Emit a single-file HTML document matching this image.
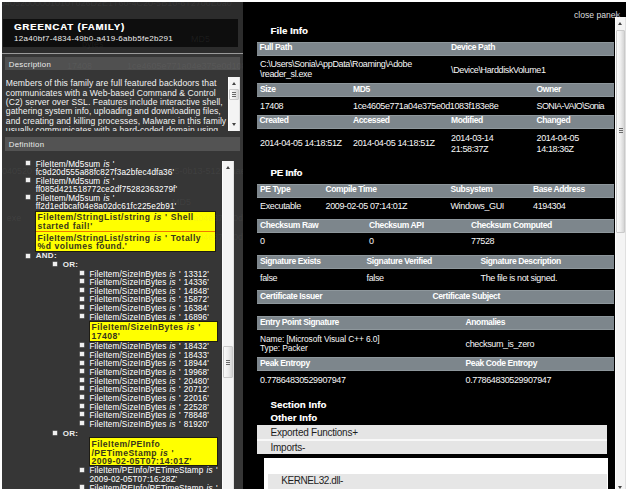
<!DOCTYPE html>
<html><head><meta charset="utf-8">
<style>
*{margin:0;padding:0;box-sizing:border-box}
html,body{width:628px;height:491px;overflow:hidden;background:#fff;font-family:"Liberation Sans",sans-serif;position:relative}
</style></head><body>
<div style="position:absolute;left:2px;top:2px;width:624px;height:487px;background:#000"></div>
<div style="position:absolute;left:574px;top:10.72px;font-size:8.6px;line-height:8.6px;white-space:nowrap;color:#ddd">close panel</div>
<div style="position:absolute;left:615.5px;top:10.72px;font-size:8.6px;line-height:8.6px;white-space:nowrap;color:#8fa0c0">&times;</div>
<div style="position:absolute;left:270.5px;top:26.17px;font-size:9.6px;line-height:9.6px;white-space:nowrap;color:#fff;font-weight:bold;letter-spacing:0.08px;text-shadow:0.3px 0 0 rgba(255,255,255,.5)">File Info</div>
<div style="position:absolute;left:257px;top:42px;width:357px;height:14px;background:#7d868c;border-top:1px solid #8e979c;border-bottom:1px solid #8e979c"></div>
<div style="position:absolute;left:259.5px;top:43.00px;font-size:8.5px;line-height:8.5px;white-space:nowrap;color:#fff;font-weight:bold;letter-spacing:-0.38px">Full Path</div>
<div style="position:absolute;left:451px;top:43.00px;font-size:8.5px;line-height:8.5px;white-space:nowrap;color:#fff;font-weight:bold;letter-spacing:-0.38px">Device Path</div>
<div style="position:absolute;left:260px;top:60.28px;font-size:9px;line-height:9px;white-space:nowrap;color:#f8f8f8;letter-spacing:-0.37px">C:\Users\Sonia\AppData\Roaming\Adobe</div>
<div style="position:absolute;left:260px;top:69.88px;font-size:9px;line-height:9px;white-space:nowrap;color:#f8f8f8;letter-spacing:-0.37px">\reader_sl.exe</div>
<div style="position:absolute;left:451px;top:66.38px;font-size:9px;line-height:9px;white-space:nowrap;color:#f8f8f8;letter-spacing:-0.37px">\Device\HarddiskVolume1</div>
<div style="position:absolute;left:257px;top:83px;width:357px;height:14px;background:#7d868c;border-top:1px solid #8e979c;border-bottom:1px solid #8e979c"></div>
<div style="position:absolute;left:260px;top:84.90px;font-size:8.5px;line-height:8.5px;white-space:nowrap;color:#fff;font-weight:bold;letter-spacing:-0.38px">Size</div>
<div style="position:absolute;left:353px;top:84.90px;font-size:8.5px;line-height:8.5px;white-space:nowrap;color:#fff;font-weight:bold;letter-spacing:-0.38px">MD5</div>
<div style="position:absolute;left:536.5px;top:84.90px;font-size:8.5px;line-height:8.5px;white-space:nowrap;color:#fff;font-weight:bold;letter-spacing:-0.38px">Owner</div>
<div style="position:absolute;left:260px;top:101.88px;font-size:9px;line-height:9px;white-space:nowrap;color:#f8f8f8;letter-spacing:-0.37px">17408</div>
<div style="position:absolute;left:353px;top:101.88px;font-size:9px;line-height:9px;white-space:nowrap;color:#f8f8f8;letter-spacing:-0.37px">1ce4605e771a04e375e0d1083f183e8e</div>
<div style="position:absolute;left:536.5px;top:101.88px;font-size:9px;line-height:9px;white-space:nowrap;color:#f8f8f8;letter-spacing:-0.62px">SONIA-VAIO\Sonia</div>
<div style="position:absolute;left:257px;top:115px;width:357px;height:14px;background:#7d868c;border-top:1px solid #8e979c;border-bottom:1px solid #8e979c"></div>
<div style="position:absolute;left:259.5px;top:116.00px;font-size:8.5px;line-height:8.5px;white-space:nowrap;color:#fff;font-weight:bold;letter-spacing:-0.38px">Created</div>
<div style="position:absolute;left:353px;top:116.00px;font-size:8.5px;line-height:8.5px;white-space:nowrap;color:#fff;font-weight:bold;letter-spacing:-0.38px">Accessed</div>
<div style="position:absolute;left:451px;top:116.00px;font-size:8.5px;line-height:8.5px;white-space:nowrap;color:#fff;font-weight:bold;letter-spacing:-0.38px">Modified</div>
<div style="position:absolute;left:536.5px;top:116.00px;font-size:8.5px;line-height:8.5px;white-space:nowrap;color:#fff;font-weight:bold;letter-spacing:-0.38px">Changed</div>
<div style="position:absolute;left:260px;top:138.68px;font-size:9px;line-height:9px;white-space:nowrap;color:#f8f8f8;letter-spacing:-0.37px">2014-04-05 14:18:51Z</div>
<div style="position:absolute;left:353px;top:138.68px;font-size:9px;line-height:9px;white-space:nowrap;color:#f8f8f8;letter-spacing:-0.37px">2014-04-05 14:18:51Z</div>
<div style="position:absolute;left:451px;top:133.88px;font-size:9px;line-height:9px;white-space:nowrap;color:#f8f8f8;letter-spacing:-0.37px">2014-03-14</div>
<div style="position:absolute;left:451px;top:144.58px;font-size:9px;line-height:9px;white-space:nowrap;color:#f8f8f8;letter-spacing:-0.37px">21:58:37Z</div>
<div style="position:absolute;left:536.5px;top:133.88px;font-size:9px;line-height:9px;white-space:nowrap;color:#f8f8f8;letter-spacing:-0.37px">2014-04-05</div>
<div style="position:absolute;left:536.5px;top:144.58px;font-size:9px;line-height:9px;white-space:nowrap;color:#f8f8f8;letter-spacing:-0.37px">14:18:36Z</div>
<div style="position:absolute;left:270.5px;top:167.87px;font-size:9.6px;line-height:9.6px;white-space:nowrap;color:#fff;font-weight:bold;letter-spacing:-0.2px;text-shadow:0.3px 0 0 rgba(255,255,255,.5)">PE Info</div>
<div style="position:absolute;left:257px;top:184px;width:357px;height:14px;background:#7d868c;border-top:1px solid #8e979c;border-bottom:1px solid #8e979c"></div>
<div style="position:absolute;left:260px;top:184.80px;font-size:8.5px;line-height:8.5px;white-space:nowrap;color:#fff;font-weight:bold;letter-spacing:-0.38px">PE Type</div>
<div style="position:absolute;left:325.5px;top:184.80px;font-size:8.5px;line-height:8.5px;white-space:nowrap;color:#fff;font-weight:bold;letter-spacing:-0.38px">Compile Time</div>
<div style="position:absolute;left:450.5px;top:184.80px;font-size:8.5px;line-height:8.5px;white-space:nowrap;color:#fff;font-weight:bold;letter-spacing:-0.38px">Subsystem</div>
<div style="position:absolute;left:533px;top:184.80px;font-size:8.5px;line-height:8.5px;white-space:nowrap;color:#fff;font-weight:bold;letter-spacing:-0.38px">Base Address</div>
<div style="position:absolute;left:260px;top:201.88px;font-size:9px;line-height:9px;white-space:nowrap;color:#f8f8f8;letter-spacing:-0.37px">Executable</div>
<div style="position:absolute;left:325.5px;top:201.88px;font-size:9px;line-height:9px;white-space:nowrap;color:#f8f8f8;letter-spacing:-0.37px">2009-02-05 07:14:01Z</div>
<div style="position:absolute;left:450.5px;top:201.88px;font-size:9px;line-height:9px;white-space:nowrap;color:#f8f8f8;letter-spacing:-0.37px">Windows_GUI</div>
<div style="position:absolute;left:533px;top:201.88px;font-size:9px;line-height:9px;white-space:nowrap;color:#f8f8f8;letter-spacing:-0.37px">4194304</div>
<div style="position:absolute;left:257px;top:219px;width:357px;height:14px;background:#7d868c;border-top:1px solid #8e979c;border-bottom:1px solid #8e979c"></div>
<div style="position:absolute;left:260px;top:220.80px;font-size:8.5px;line-height:8.5px;white-space:nowrap;color:#fff;font-weight:bold;letter-spacing:-0.38px">Checksum Raw</div>
<div style="position:absolute;left:369px;top:220.80px;font-size:8.5px;line-height:8.5px;white-space:nowrap;color:#fff;font-weight:bold;letter-spacing:-0.38px">Checksum API</div>
<div style="position:absolute;left:471px;top:220.80px;font-size:8.5px;line-height:8.5px;white-space:nowrap;color:#fff;font-weight:bold;letter-spacing:-0.38px">Checksum Computed</div>
<div style="position:absolute;left:260px;top:237.38px;font-size:9px;line-height:9px;white-space:nowrap;color:#f8f8f8;letter-spacing:-0.37px">0</div>
<div style="position:absolute;left:369px;top:237.38px;font-size:9px;line-height:9px;white-space:nowrap;color:#f8f8f8;letter-spacing:-0.37px">0</div>
<div style="position:absolute;left:471px;top:237.38px;font-size:9px;line-height:9px;white-space:nowrap;color:#f8f8f8;letter-spacing:-0.37px">77528</div>
<div style="position:absolute;left:257px;top:255px;width:357px;height:14px;background:#7d868c;border-top:1px solid #8e979c;border-bottom:1px solid #8e979c"></div>
<div style="position:absolute;left:260px;top:256.80px;font-size:8.5px;line-height:8.5px;white-space:nowrap;color:#fff;font-weight:bold;letter-spacing:-0.38px">Signature Exists</div>
<div style="position:absolute;left:366.5px;top:256.80px;font-size:8.5px;line-height:8.5px;white-space:nowrap;color:#fff;font-weight:bold;letter-spacing:-0.38px">Signature Verified</div>
<div style="position:absolute;left:480.5px;top:256.80px;font-size:8.5px;line-height:8.5px;white-space:nowrap;color:#fff;font-weight:bold;letter-spacing:-0.38px">Signature Description</div>
<div style="position:absolute;left:260px;top:274.18px;font-size:9px;line-height:9px;white-space:nowrap;color:#f8f8f8;letter-spacing:-0.37px">false</div>
<div style="position:absolute;left:366.5px;top:274.18px;font-size:9px;line-height:9px;white-space:nowrap;color:#f8f8f8;letter-spacing:-0.37px">false</div>
<div style="position:absolute;left:480.5px;top:274.18px;font-size:9px;line-height:9px;white-space:nowrap;color:#f8f8f8;letter-spacing:-0.37px">The file is not signed.</div>
<div style="position:absolute;left:257px;top:290px;width:357px;height:14px;background:#7d868c;border-top:1px solid #8e979c;border-bottom:1px solid #8e979c"></div>
<div style="position:absolute;left:260px;top:291.80px;font-size:8.5px;line-height:8.5px;white-space:nowrap;color:#fff;font-weight:bold;letter-spacing:-0.38px">Certificate Issuer</div>
<div style="position:absolute;left:432.5px;top:291.80px;font-size:8.5px;line-height:8.5px;white-space:nowrap;color:#fff;font-weight:bold;letter-spacing:-0.38px">Certificate Subject</div>
<div style="position:absolute;left:257px;top:316px;width:357px;height:14px;background:#7d868c;border-top:1px solid #8e979c;border-bottom:1px solid #8e979c"></div>
<div style="position:absolute;left:260px;top:317.80px;font-size:8.5px;line-height:8.5px;white-space:nowrap;color:#fff;font-weight:bold;letter-spacing:-0.38px">Entry Point Signature</div>
<div style="position:absolute;left:465.5px;top:317.80px;font-size:8.5px;line-height:8.5px;white-space:nowrap;color:#fff;font-weight:bold;letter-spacing:-0.38px">Anomalies</div>
<div style="position:absolute;left:260px;top:334.69px;font-size:8.4px;line-height:8.4px;white-space:nowrap;color:#f8f8f8;letter-spacing:-0.1px">Name: [Microsoft Visual C++ 6.0]</div>
<div style="position:absolute;left:260px;top:343.89px;font-size:8.4px;line-height:8.4px;white-space:nowrap;color:#f8f8f8;letter-spacing:-0.1px">Type: Packer</div>
<div style="position:absolute;left:465.5px;top:340.38px;font-size:9px;line-height:9px;white-space:nowrap;color:#f8f8f8;letter-spacing:-0.37px">checksum_is_zero</div>
<div style="position:absolute;left:257px;top:357px;width:357px;height:14px;background:#7d868c;border-top:1px solid #8e979c;border-bottom:1px solid #8e979c"></div>
<div style="position:absolute;left:260px;top:358.80px;font-size:8.5px;line-height:8.5px;white-space:nowrap;color:#fff;font-weight:bold;letter-spacing:-0.38px">Peak Entropy</div>
<div style="position:absolute;left:465.5px;top:358.80px;font-size:8.5px;line-height:8.5px;white-space:nowrap;color:#fff;font-weight:bold;letter-spacing:-0.38px">Peak Code Entropy</div>
<div style="position:absolute;left:260px;top:376.38px;font-size:9px;line-height:9px;white-space:nowrap;color:#f8f8f8;letter-spacing:-0.37px">0.77864830529907947</div>
<div style="position:absolute;left:465.5px;top:376.38px;font-size:9px;line-height:9px;white-space:nowrap;color:#f8f8f8;letter-spacing:-0.37px">0.77864830529907947</div>
<div style="position:absolute;left:270.5px;top:399.87px;font-size:9.6px;line-height:9.6px;white-space:nowrap;color:#fff;font-weight:bold;letter-spacing:0.08px;text-shadow:0.3px 0 0 rgba(255,255,255,.5)">Section Info</div>
<div style="position:absolute;left:270.5px;top:413.37px;font-size:9.6px;line-height:9.6px;white-space:nowrap;color:#fff;font-weight:bold;letter-spacing:0.08px;text-shadow:0.3px 0 0 rgba(255,255,255,.5)">Other Info</div>
<div style="position:absolute;left:257px;top:425px;width:350px;height:29px;background:#f8f8f8"></div>
<div style="position:absolute;left:257px;top:425px;width:350px;height:14px;background:#e5e5e5"></div>
<div style="position:absolute;left:257px;top:441px;width:350px;height:13px;background:#e5e5e5"></div>
<div style="position:absolute;left:270.5px;top:428.04px;font-size:10px;line-height:10px;white-space:nowrap;color:#1e1e1e;letter-spacing:-0.25px">Exported Functions+</div>
<div style="position:absolute;left:270.5px;top:442.54px;font-size:10px;line-height:10px;white-space:nowrap;color:#1e1e1e;letter-spacing:-0.25px">Imports-</div>
<div style="position:absolute;left:264px;top:458px;width:344px;height:31px;background:#fff"></div>
<div style="position:absolute;left:268px;top:474px;width:339px;height:15px;background:#e6e6e6"></div>
<div style="position:absolute;left:281.3px;top:475.54px;font-size:10px;line-height:10px;white-space:nowrap;color:#1e1e1e;letter-spacing:-0.43px">KERNEL32.dll-</div>
<div style="position:absolute;left:615px;top:17px;width:11px;height:472px;background:#f4f4f4;border-left:1px solid #fdfdfd;border-right:1px solid #e0e0e0"></div>
<div style="position:absolute;left:616px;top:29.5px;width:9px;height:203.0px;background:linear-gradient(90deg,#fafafa 0%,#eeeeee 50%,#d6d6d6 100%);border:1px solid #cacaca;border-radius:1px"></div>
<div style="position:absolute;left:618.0px;top:21.5px;width:0;height:0;border-left:2.5px solid transparent;border-right:2.5px solid transparent;border-bottom:3px solid #444"></div>
<div style="position:absolute;left:618.0px;top:486.0px;width:0;height:0;border-left:2.5px solid transparent;border-right:2.5px solid transparent;border-top:3px solid #444"></div>
<div style="position:absolute;left:618.5px;top:127.80000000000001px;width:4px;height:1px;background:#6a6a6a"></div>
<div style="position:absolute;left:618.5px;top:129.8px;width:4px;height:1px;background:#6a6a6a"></div>
<div style="position:absolute;left:618.5px;top:131.8px;width:4px;height:1px;background:#6a6a6a"></div>
<div style="position:absolute;left:2px;top:2px;width:241px;height:487px;background:#2c2c2c"></div>
<div style="position:absolute;left:3px;top:19px;width:235px;height:28px;background:#0e0e0e"></div>
<div style="position:absolute;left:14px;top:22.37px;font-size:9.6px;line-height:9.6px;white-space:nowrap;color:#fff;font-weight:bold;letter-spacing:0.85px;text-shadow:0.4px 0 0 rgba(255,255,255,.6)">GREENCAT (FAMILY)</div>
<div style="position:absolute;left:14px;top:34.63px;font-size:8px;line-height:8px;white-space:nowrap;color:#eee;letter-spacing:0.29px">12a40bf7-4834-49b0-a419-6abb5fe2b291</div>
<div style="position:absolute;left:2px;top:53px;width:241px;height:1px;background:#9a9a9a"></div>
<div style="position:absolute;left:2px;top:54px;width:241px;height:435px;background:#363636"></div>
<div style="position:absolute;left:5px;top:57px;width:235px;height:13px;background:#505050"></div>
<div style="position:absolute;left:8.8px;top:61.00px;font-size:7.8px;line-height:7.8px;white-space:nowrap;color:#ececec;letter-spacing:0.3px">Description</div>
<div style="position:absolute;left:2px;top:76px;width:226px;height:55px;overflow:hidden">
<div style="position:absolute;left:3.8px;top:3.37px;font-size:8.6px;line-height:8.6px;white-space:nowrap;color:#f2f2f2;letter-spacing:0.07px">Members of this family are full featured backdoors that</div>
<div style="position:absolute;left:3.8px;top:12.72px;font-size:8.6px;line-height:8.6px;white-space:nowrap;color:#f2f2f2;letter-spacing:0.07px">communicates with a Web-based Command &amp; Control</div>
<div style="position:absolute;left:3.8px;top:22.07px;font-size:8.6px;line-height:8.6px;white-space:nowrap;color:#f2f2f2;letter-spacing:0.07px">(C2) server over SSL. Features include interactive shell,</div>
<div style="position:absolute;left:3.8px;top:31.42px;font-size:8.6px;line-height:8.6px;white-space:nowrap;color:#f2f2f2;letter-spacing:0.07px">gathering system info, uploading and downloading files,</div>
<div style="position:absolute;left:3.8px;top:40.77px;font-size:8.6px;line-height:8.6px;white-space:nowrap;color:#f2f2f2;letter-spacing:0.07px">and creating and killing processes, Malware in this family</div>
<div style="position:absolute;left:3.8px;top:50.12px;font-size:8.6px;line-height:8.6px;white-space:nowrap;color:#f2f2f2;letter-spacing:0.07px">usually communicates with a hard-coded domain using</div>
</div>
<div style="position:absolute;left:228px;top:77px;width:12px;height:54px;background:#f4f4f4;border-left:1px solid #fdfdfd;border-right:1px solid #e0e0e0"></div>
<div style="position:absolute;left:229px;top:89px;width:10px;height:11px;background:linear-gradient(90deg,#fafafa 0%,#eeeeee 50%,#d6d6d6 100%);border:1px solid #cacaca;border-radius:1px"></div>
<div style="position:absolute;left:231.5px;top:81.7px;width:0;height:0;border-left:2.5px solid transparent;border-right:2.5px solid transparent;border-bottom:3px solid #444"></div>
<div style="position:absolute;left:231.5px;top:123.2px;width:0;height:0;border-left:2.5px solid transparent;border-right:2.5px solid transparent;border-top:3px solid #444"></div>
<div style="position:absolute;left:232.0px;top:92.0px;width:4px;height:1px;background:#6a6a6a"></div>
<div style="position:absolute;left:232.0px;top:94.0px;width:4px;height:1px;background:#6a6a6a"></div>
<div style="position:absolute;left:232.0px;top:96.0px;width:4px;height:1px;background:#6a6a6a"></div>
<div style="position:absolute;left:5px;top:137px;width:235px;height:14px;background:#535353"></div>
<div style="position:absolute;left:8.8px;top:141.30px;font-size:7.8px;line-height:7.8px;white-space:nowrap;color:#ececec;letter-spacing:0.3px">Definition</div>
<div style="position:absolute;left:26.2px;top:161.0px;width:4px;height:4px;background:#f0f0f0;box-shadow:0 0 0.5px 0.4px rgba(240,240,240,.55)"></div>
<div style="position:absolute;left:35.7px;top:160.76px;font-size:8.2px;line-height:8.2px;white-space:nowrap;color:#f4f4f4;letter-spacing:0.12px;word-spacing:0.8px;text-shadow:0 0 0.3px rgba(255,255,255,.3)">FileItem/Md5sum <i>is</i> '</div>
<div style="position:absolute;left:35.7px;top:168.96px;font-size:8.2px;line-height:8.2px;white-space:nowrap;color:#f4f4f4;letter-spacing:0.12px;word-spacing:0.8px;text-shadow:0 0 0.3px rgba(255,255,255,.3)">fc9d20d555a88fc827f3a2bfec4dfa36'</div>
<div style="position:absolute;left:26.2px;top:178.20000000000002px;width:4px;height:4px;background:#f0f0f0;box-shadow:0 0 0.5px 0.4px rgba(240,240,240,.55)"></div>
<div style="position:absolute;left:35.7px;top:177.96px;font-size:8.2px;line-height:8.2px;white-space:nowrap;color:#f4f4f4;letter-spacing:0.12px;word-spacing:0.8px;text-shadow:0 0 0.3px rgba(255,255,255,.3)">FileItem/Md5sum <i>is</i> '</div>
<div style="position:absolute;left:35.7px;top:186.26px;font-size:8.2px;line-height:8.2px;white-space:nowrap;color:#f4f4f4;letter-spacing:0.12px;word-spacing:0.8px;text-shadow:0 0 0.3px rgba(255,255,255,.3)">ff085d421518772ce2df75282363279f'</div>
<div style="position:absolute;left:26.2px;top:195.10000000000002px;width:4px;height:4px;background:#f0f0f0;box-shadow:0 0 0.5px 0.4px rgba(240,240,240,.55)"></div>
<div style="position:absolute;left:35.7px;top:194.86px;font-size:8.2px;line-height:8.2px;white-space:nowrap;color:#f4f4f4;letter-spacing:0.12px;word-spacing:0.8px;text-shadow:0 0 0.3px rgba(255,255,255,.3)">FileItem/Md5sum <i>is</i> '</div>
<div style="position:absolute;left:35.7px;top:203.26px;font-size:8.2px;line-height:8.2px;white-space:nowrap;color:#f4f4f4;letter-spacing:0.12px;word-spacing:0.8px;text-shadow:0 0 0.3px rgba(255,255,255,.3)">ff2d1edbcaf04e8a02dc61fc225e2b91'</div>
<div style="position:absolute;left:35px;top:211px;width:181px;height:41px;background:#ffff00;border:1px solid #1e1c14"></div>
<div style="position:absolute;left:36px;top:231px;width:179px;height:1px;background:#f07800"></div>
<div style="position:absolute;left:37.6px;top:213.22px;font-size:8.6px;line-height:8.6px;white-space:nowrap;color:#38361a;font-weight:bold;letter-spacing:0.45px;word-spacing:0.4px">FileItem/StringList/string <i>is</i> ' Shell</div>
<div style="position:absolute;left:37.6px;top:221.72px;font-size:8.6px;line-height:8.6px;white-space:nowrap;color:#38361a;font-weight:bold;letter-spacing:0.45px;word-spacing:0.4px">started fail!'</div>
<div style="position:absolute;left:37.6px;top:233.52px;font-size:8.6px;line-height:8.6px;white-space:nowrap;color:#38361a;font-weight:bold;letter-spacing:0.45px;word-spacing:0.4px">FileItem/StringList/string <i>is</i> ' Totally</div>
<div style="position:absolute;left:37.6px;top:241.92px;font-size:8.6px;line-height:8.6px;white-space:nowrap;color:#38361a;font-weight:bold;letter-spacing:0.45px;word-spacing:0.4px">%d volumes found.'</div>
<div style="position:absolute;left:26.05px;top:253.7px;width:4px;height:4px;background:#f0f0f0;box-shadow:0 0 0.5px 0.4px rgba(240,240,240,.55)"></div>
<div style="position:absolute;left:35.7px;top:252.23px;font-size:8px;line-height:8px;white-space:nowrap;color:#eee;font-weight:bold;letter-spacing:0.3px">AND:</div>
<div style="position:absolute;left:53.2px;top:262.35px;width:4px;height:4px;background:#f0f0f0;box-shadow:0 0 0.5px 0.4px rgba(240,240,240,.55)"></div>
<div style="position:absolute;left:62.7px;top:260.93px;font-size:8px;line-height:8px;white-space:nowrap;color:#eee;font-weight:bold;letter-spacing:0.3px">OR:</div>
<div style="position:absolute;left:80px;top:270.65000000000003px;width:4px;height:4px;background:#f0f0f0;box-shadow:0 0 0.5px 0.4px rgba(240,240,240,.55)"></div>
<div style="position:absolute;left:89.4px;top:270.61px;font-size:8.2px;line-height:8.2px;white-space:nowrap;color:#f4f4f4;letter-spacing:0.12px;word-spacing:0.8px;text-shadow:0 0 0.3px rgba(255,255,255,.3)">FileItem/SizeInBytes <i>is</i> ' 13312'</div>
<div style="position:absolute;left:80px;top:279.27000000000004px;width:4px;height:4px;background:#f0f0f0;box-shadow:0 0 0.5px 0.4px rgba(240,240,240,.55)"></div>
<div style="position:absolute;left:89.4px;top:279.23px;font-size:8.2px;line-height:8.2px;white-space:nowrap;color:#f4f4f4;letter-spacing:0.12px;word-spacing:0.8px;text-shadow:0 0 0.3px rgba(255,255,255,.3)">FileItem/SizeInBytes <i>is</i> ' 14336'</div>
<div style="position:absolute;left:80px;top:287.89000000000004px;width:4px;height:4px;background:#f0f0f0;box-shadow:0 0 0.5px 0.4px rgba(240,240,240,.55)"></div>
<div style="position:absolute;left:89.4px;top:287.85px;font-size:8.2px;line-height:8.2px;white-space:nowrap;color:#f4f4f4;letter-spacing:0.12px;word-spacing:0.8px;text-shadow:0 0 0.3px rgba(255,255,255,.3)">FileItem/SizeInBytes <i>is</i> ' 14848'</div>
<div style="position:absolute;left:80px;top:296.51000000000005px;width:4px;height:4px;background:#f0f0f0;box-shadow:0 0 0.5px 0.4px rgba(240,240,240,.55)"></div>
<div style="position:absolute;left:89.4px;top:296.47px;font-size:8.2px;line-height:8.2px;white-space:nowrap;color:#f4f4f4;letter-spacing:0.12px;word-spacing:0.8px;text-shadow:0 0 0.3px rgba(255,255,255,.3)">FileItem/SizeInBytes <i>is</i> ' 15872'</div>
<div style="position:absolute;left:80px;top:305.13000000000005px;width:4px;height:4px;background:#f0f0f0;box-shadow:0 0 0.5px 0.4px rgba(240,240,240,.55)"></div>
<div style="position:absolute;left:89.4px;top:305.09px;font-size:8.2px;line-height:8.2px;white-space:nowrap;color:#f4f4f4;letter-spacing:0.12px;word-spacing:0.8px;text-shadow:0 0 0.3px rgba(255,255,255,.3)">FileItem/SizeInBytes <i>is</i> ' 16384'</div>
<div style="position:absolute;left:80px;top:313.75000000000006px;width:4px;height:4px;background:#f0f0f0;box-shadow:0 0 0.5px 0.4px rgba(240,240,240,.55)"></div>
<div style="position:absolute;left:89.4px;top:313.71px;font-size:8.2px;line-height:8.2px;white-space:nowrap;color:#f4f4f4;letter-spacing:0.12px;word-spacing:0.8px;text-shadow:0 0 0.3px rgba(255,255,255,.3)">FileItem/SizeInBytes <i>is</i> ' 16896'</div>
<div style="position:absolute;left:89px;top:321px;width:129px;height:21px;background:#ffff00;border:1px solid #1e1c14"></div>
<div style="position:absolute;left:91.5px;top:323.42px;font-size:8.6px;line-height:8.6px;white-space:nowrap;color:#38361a;font-weight:bold;letter-spacing:0.45px;word-spacing:0.4px">FileItem/SizeInBytes <i>is</i> '</div>
<div style="position:absolute;left:91.5px;top:331.82px;font-size:8.6px;line-height:8.6px;white-space:nowrap;color:#38361a;font-weight:bold;letter-spacing:0.45px;word-spacing:0.4px">17408'</div>
<div style="position:absolute;left:80px;top:343.25px;width:4px;height:4px;background:#f0f0f0;box-shadow:0 0 0.5px 0.4px rgba(240,240,240,.55)"></div>
<div style="position:absolute;left:89.4px;top:343.21px;font-size:8.2px;line-height:8.2px;white-space:nowrap;color:#f4f4f4;letter-spacing:0.12px;word-spacing:0.8px;text-shadow:0 0 0.3px rgba(255,255,255,.3)">FileItem/SizeInBytes <i>is</i> ' 18432'</div>
<div style="position:absolute;left:80px;top:351.89px;width:4px;height:4px;background:#f0f0f0;box-shadow:0 0 0.5px 0.4px rgba(240,240,240,.55)"></div>
<div style="position:absolute;left:89.4px;top:351.85px;font-size:8.2px;line-height:8.2px;white-space:nowrap;color:#f4f4f4;letter-spacing:0.12px;word-spacing:0.8px;text-shadow:0 0 0.3px rgba(255,255,255,.3)">FileItem/SizeInBytes <i>is</i> ' 18433'</div>
<div style="position:absolute;left:80px;top:360.53000000000003px;width:4px;height:4px;background:#f0f0f0;box-shadow:0 0 0.5px 0.4px rgba(240,240,240,.55)"></div>
<div style="position:absolute;left:89.4px;top:360.49px;font-size:8.2px;line-height:8.2px;white-space:nowrap;color:#f4f4f4;letter-spacing:0.12px;word-spacing:0.8px;text-shadow:0 0 0.3px rgba(255,255,255,.3)">FileItem/SizeInBytes <i>is</i> ' 18944'</div>
<div style="position:absolute;left:80px;top:369.17px;width:4px;height:4px;background:#f0f0f0;box-shadow:0 0 0.5px 0.4px rgba(240,240,240,.55)"></div>
<div style="position:absolute;left:89.4px;top:369.13px;font-size:8.2px;line-height:8.2px;white-space:nowrap;color:#f4f4f4;letter-spacing:0.12px;word-spacing:0.8px;text-shadow:0 0 0.3px rgba(255,255,255,.3)">FileItem/SizeInBytes <i>is</i> ' 19968'</div>
<div style="position:absolute;left:80px;top:377.81px;width:4px;height:4px;background:#f0f0f0;box-shadow:0 0 0.5px 0.4px rgba(240,240,240,.55)"></div>
<div style="position:absolute;left:89.4px;top:377.77px;font-size:8.2px;line-height:8.2px;white-space:nowrap;color:#f4f4f4;letter-spacing:0.12px;word-spacing:0.8px;text-shadow:0 0 0.3px rgba(255,255,255,.3)">FileItem/SizeInBytes <i>is</i> ' 20480'</div>
<div style="position:absolute;left:80px;top:386.45px;width:4px;height:4px;background:#f0f0f0;box-shadow:0 0 0.5px 0.4px rgba(240,240,240,.55)"></div>
<div style="position:absolute;left:89.4px;top:386.41px;font-size:8.2px;line-height:8.2px;white-space:nowrap;color:#f4f4f4;letter-spacing:0.12px;word-spacing:0.8px;text-shadow:0 0 0.3px rgba(255,255,255,.3)">FileItem/SizeInBytes <i>is</i> ' 20712'</div>
<div style="position:absolute;left:80px;top:395.09px;width:4px;height:4px;background:#f0f0f0;box-shadow:0 0 0.5px 0.4px rgba(240,240,240,.55)"></div>
<div style="position:absolute;left:89.4px;top:395.05px;font-size:8.2px;line-height:8.2px;white-space:nowrap;color:#f4f4f4;letter-spacing:0.12px;word-spacing:0.8px;text-shadow:0 0 0.3px rgba(255,255,255,.3)">FileItem/SizeInBytes <i>is</i> ' 22016'</div>
<div style="position:absolute;left:80px;top:403.73px;width:4px;height:4px;background:#f0f0f0;box-shadow:0 0 0.5px 0.4px rgba(240,240,240,.55)"></div>
<div style="position:absolute;left:89.4px;top:403.69px;font-size:8.2px;line-height:8.2px;white-space:nowrap;color:#f4f4f4;letter-spacing:0.12px;word-spacing:0.8px;text-shadow:0 0 0.3px rgba(255,255,255,.3)">FileItem/SizeInBytes <i>is</i> ' 22528'</div>
<div style="position:absolute;left:80px;top:412.37px;width:4px;height:4px;background:#f0f0f0;box-shadow:0 0 0.5px 0.4px rgba(240,240,240,.55)"></div>
<div style="position:absolute;left:89.4px;top:412.33px;font-size:8.2px;line-height:8.2px;white-space:nowrap;color:#f4f4f4;letter-spacing:0.12px;word-spacing:0.8px;text-shadow:0 0 0.3px rgba(255,255,255,.3)">FileItem/SizeInBytes <i>is</i> ' 78848'</div>
<div style="position:absolute;left:80px;top:421.01px;width:4px;height:4px;background:#f0f0f0;box-shadow:0 0 0.5px 0.4px rgba(240,240,240,.55)"></div>
<div style="position:absolute;left:89.4px;top:420.97px;font-size:8.2px;line-height:8.2px;white-space:nowrap;color:#f4f4f4;letter-spacing:0.12px;word-spacing:0.8px;text-shadow:0 0 0.3px rgba(255,255,255,.3)">FileItem/SizeInBytes <i>is</i> ' 81920'</div>
<div style="position:absolute;left:53.2px;top:431px;width:4px;height:4px;background:#f0f0f0;box-shadow:0 0 0.5px 0.4px rgba(240,240,240,.55)"></div>
<div style="position:absolute;left:62.7px;top:429.63px;font-size:8px;line-height:8px;white-space:nowrap;color:#eee;font-weight:bold;letter-spacing:0.3px">OR:</div>
<div style="position:absolute;left:89px;top:437px;width:129px;height:29px;background:#ffff00;border:1px solid #1e1c14"></div>
<div style="position:absolute;left:91.5px;top:439.82px;font-size:8.6px;line-height:8.6px;white-space:nowrap;color:#38361a;font-weight:bold;letter-spacing:0.45px;word-spacing:0.4px">FileItem/PEInfo</div>
<div style="position:absolute;left:91.5px;top:448.62px;font-size:8.6px;line-height:8.6px;white-space:nowrap;color:#38361a;font-weight:bold;letter-spacing:0.45px;word-spacing:0.4px">/PETimeStamp <i>is</i> '</div>
<div style="position:absolute;left:91.5px;top:456.72px;font-size:8.6px;line-height:8.6px;white-space:nowrap;color:#38361a;font-weight:bold;letter-spacing:0.45px;word-spacing:0.4px">2009-02-05T07:14:01Z'</div>
<div style="position:absolute;left:80px;top:467.6px;width:4px;height:4px;background:#f0f0f0;box-shadow:0 0 0.5px 0.4px rgba(240,240,240,.55)"></div>
<div style="position:absolute;left:89.4px;top:467.36px;font-size:8.2px;line-height:8.2px;white-space:nowrap;color:#f4f4f4;letter-spacing:0.12px;word-spacing:0.8px;text-shadow:0 0 0.3px rgba(255,255,255,.3)">FileItem/PEInfo/PETimeStamp <i>is</i> '</div>
<div style="position:absolute;left:89.4px;top:476.06px;font-size:8.2px;line-height:8.2px;white-space:nowrap;color:#f4f4f4;letter-spacing:0.12px;word-spacing:0.8px;text-shadow:0 0 0.3px rgba(255,255,255,.3)">2009-02-05T07:16:28Z'</div>
<div style="position:absolute;left:80px;top:484.90000000000003px;width:4px;height:4px;background:#f0f0f0;box-shadow:0 0 0.5px 0.4px rgba(240,240,240,.55)"></div>
<div style="position:absolute;left:89.4px;top:484.66px;font-size:8.2px;line-height:8.2px;white-space:nowrap;color:#f4f4f4;letter-spacing:0.12px;word-spacing:0.8px;text-shadow:0 0 0.3px rgba(255,255,255,.3)">FileItem/PEInfo/PETimeStamp <i>is</i> '</div>
<div style="position:absolute;left:2px;top:2px;width:241px;height:487px;overflow:hidden">
<div style="position:absolute;left:-2px;top:-3.12px;font-size:9px;line-height:9px;white-space:nowrap;color:rgba(160,160,160,.1)">04052000001010T026D2E1T60-4C20-5B10-6T2700E0a0</div>
<div style="position:absolute;left:189px;top:32.88px;font-size:9px;line-height:9px;white-space:nowrap;color:rgba(160,160,160,.1)">MD5</div>
<div style="position:absolute;left:80px;top:38.38px;font-size:9px;line-height:9px;white-space:nowrap;color:rgba(160,160,160,.1)">bytes</div>
<div style="position:absolute;left:65px;top:59.88px;font-size:9px;line-height:9px;white-space:nowrap;color:rgba(160,160,160,.1)">17408</div>
<div style="position:absolute;left:125px;top:59.88px;font-size:9px;line-height:9px;white-space:nowrap;color:rgba(160,160,160,.1)">1ce4605e771a04e375e0d1083f183e8e</div>
<div style="position:absolute;left:0px;top:164.88px;font-size:9px;line-height:9px;white-space:nowrap;color:rgba(160,160,160,.1)">040520</div>
<div style="position:absolute;left:150px;top:164.88px;font-size:9px;line-height:9px;white-space:nowrap;color:rgba(160,160,160,.1)">0-4c65-0b13-51275aae</div>
<div style="position:absolute;left:170px;top:195.88px;font-size:9px;line-height:9px;white-space:nowrap;color:rgba(160,160,160,.1)">MD5</div>
<div style="position:absolute;left:4.8px;top:211.88px;font-size:9px;line-height:9px;white-space:nowrap;color:rgba(160,160,160,.1)">exe</div>
<div style="position:absolute;left:186px;top:211.88px;font-size:9px;line-height:9px;white-space:nowrap;color:rgba(160,160,160,.1)">1a04e375e0d1083f183e8e</div>
<div style="position:absolute;left:186px;top:230.88px;font-size:9px;line-height:9px;white-space:nowrap;color:rgba(160,160,160,.1)">1a04e375e0d1083f183e8e</div>
</div>
<div style="position:absolute;left:222px;top:161px;width:12px;height:328px;background:#f4f4f4;border-left:1px solid #fdfdfd;border-right:1px solid #e0e0e0"></div>
<div style="position:absolute;left:223px;top:346px;width:10px;height:32px;background:linear-gradient(90deg,#fafafa 0%,#eeeeee 50%,#d6d6d6 100%);border:1px solid #cacaca;border-radius:1px"></div>
<div style="position:absolute;left:225.5px;top:165.5px;width:0;height:0;border-left:2.5px solid transparent;border-right:2.5px solid transparent;border-bottom:3px solid #444"></div>
<div style="position:absolute;left:226.0px;top:359.5px;width:4px;height:1px;background:#6a6a6a"></div>
<div style="position:absolute;left:226.0px;top:361.5px;width:4px;height:1px;background:#6a6a6a"></div>
<div style="position:absolute;left:226.0px;top:363.5px;width:4px;height:1px;background:#6a6a6a"></div>
<div style="position:absolute;left:0px;top:489px;width:628px;height:2px;background:#fff"></div>
</body></html>
